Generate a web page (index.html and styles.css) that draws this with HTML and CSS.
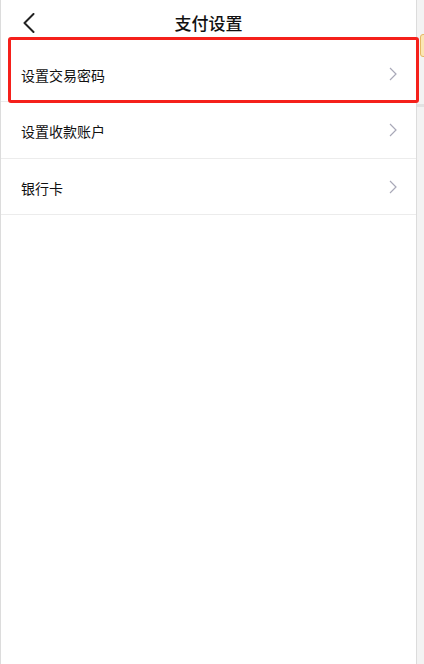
FILE: index.html
```html
<!DOCTYPE html>
<html lang="zh">
<head>
<meta charset="utf-8">
<title>支付设置</title>
<link rel="stylesheet" href="styles.css">
</head>
<body>
<div class="screen">
  <div class="page">
    <header class="header">
      <span class="back">
        <svg width="12" height="20" viewBox="0 0 12 20"><path d="M10.5 1 L1.5 10 L10.5 19" fill="none" stroke="#222" stroke-width="2" stroke-linecap="round" stroke-linejoin="round"/></svg>
      </span>
      <h1 class="title">支付设置</h1>
    </header>
    <ul class="list">
      <li class="row"><span class="label">设置交易密码</span><svg class="chev" width="8" height="14" viewBox="0 0 8 14"><path d="M1 1 L7 7 L1 13" fill="none" stroke="#a9a9b8" stroke-width="1.2"/></svg></li>
      <li class="row"><span class="label">设置收款账户</span><svg class="chev" width="8" height="14" viewBox="0 0 8 14"><path d="M1 1 L7 7 L1 13" fill="none" stroke="#a9a9b8" stroke-width="1.2"/></svg></li>
      <li class="row"><span class="label">银行卡</span><svg class="chev" width="8" height="14" viewBox="0 0 8 14"><path d="M1 1 L7 7 L1 13" fill="none" stroke="#a9a9b8" stroke-width="1.2"/></svg></li>
    </ul>
  </div>
  <div class="side">
    <div class="side-line"></div>
  </div>
  <div class="highlight"></div>
  <div class="tab"></div>
</div>
</body>
</html>
```

FILE: styles.css
```css
* { box-sizing: border-box; }
html, body { margin: 0; padding: 0; background: #fff; }
body {
  font-family: "Noto Sans CJK SC", "Noto Sans", sans-serif;
  color: #1c1c1c;
}
.screen {
  position: relative;
  display: flex;
  width: 424px;
  height: 664px;
  overflow: hidden;
}
.page {
  width: 417px;
  height: 664px;
  border-left: 1px solid #dcdcdc;
  border-right: 1px solid #dcdcdc;
  background: #fff;
}
.header {
  position: relative;
  height: 46px;
  display: flex;
  align-items: center;
  justify-content: center;
}
.back {
  position: absolute;
  left: 22px;
  top: 13px;
  width: 12px;
  height: 20px;
  display: flex;
}
.title {
  margin: 0;
  font-size: 17px;
  font-weight: 500;
  line-height: 1;
  color: #111;
  padding-bottom: 1px;
}
.list { list-style: none; margin: 0; padding: 0; }
.row {
  height: 57px;
  display: flex;
  align-items: center;
  justify-content: space-between;
  padding: 0 19px 0 20px;
  border-bottom: 1px solid #ececec;
}
.row:nth-child(1) { height: 56px; }
.row:nth-child(3) { height: 56px; }
.label {
  font-size: 14px;
  line-height: 1;
  color: #111;
  padding-top: 2px;
}
.chev { display: block; }
.side {
  flex: 1;
  background: #f3f3f3;
  position: relative;
}
.side-line {
  margin-top: 104px;
  height: 3px;
  background: #e2e2e2;
}
.highlight {
  position: absolute;
  left: 8px;
  top: 37px;
  width: 411px;
  height: 66px;
  border: 3px solid #f5201b;
  border-radius: 3px;
}
.tab {
  position: absolute;
  left: 420px;
  top: 34px;
  width: 10px;
  height: 23px;
  background: #fbe6b4;
  border: 1px solid #e6b865;
  border-radius: 3px;
}
```
